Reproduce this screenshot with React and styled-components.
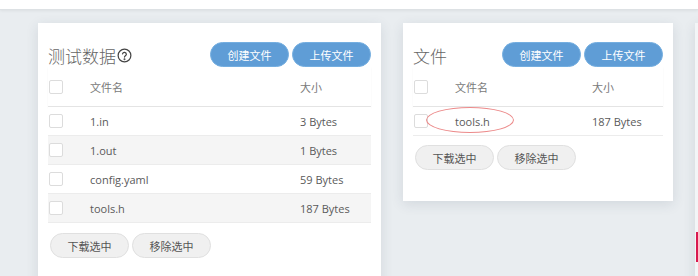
import React from 'react'
import styled, { createGlobalStyle } from 'styled-components'

const GlobalStyle = createGlobalStyle`
  html, body {
    margin: 0;
    padding: 0;
    background: #e9edf0;
    overflow: hidden;
    font-family: "Open Sans", "Noto Sans CJK SC", sans-serif;
  }
`

const TopBar = styled.header`
  height: 9px;
  background: #ffffff;
  border-bottom: 1px solid #dde1e4;
  box-shadow: 0 1px 3px rgba(0,0,0,0.06);
`

const Board = styled.main`
  display: flex;
  align-items: flex-start;
  gap: 22px;
  padding: 13px 0 0 38px;
  width: 1200px;
`

const Card = styled.section`
  position: relative;
  flex: 0 0 ${p => p.$width}px;
  height: ${p => p.$height ? `${p.$height}px` : 'auto'};
  box-sizing: border-box;
  background: ${p => p.$faded ? '#f3f5f7' : '#ffffff'};
  padding: 19px 10px ${p => p.$bottom || 29}px 10px;
  box-shadow: 0 3px 12px rgba(40,60,80,0.12);
`

const TitleRow = styled.div`
  display: flex;
  align-items: center;
  height: 25px;
`

const Title = styled.h2`
  flex: 1;
  display: flex;
  align-items: center;
  margin: 0;
  padding-top: 2px;
  font-family: "Noto Sans CJK SC", sans-serif;
  font-size: 17px;
  font-weight: 300;
  color: #666666;
`

const Help = styled.svg`
  width: 15px;
  height: 15px;
  margin-left: 1px;
`

const Buttons = styled.div`
  display: flex;
  gap: 3px;
`

const PillButton = styled.button`
  width: 79px;
  height: 25px;
  border-radius: 13px;
  border: 1px solid ${p => p.$primary ? '#74aee0' : '#e0e0e0'};
  background: ${p => p.$primary ? '#5f9dd6' : '#f0f0f0'};
  color: ${p => p.$primary ? '#ffffff' : '#555555'};
  font-family: "Noto Sans CJK SC", sans-serif;
  font-size: 11px;
  padding: 0;
  cursor: pointer;
`

const Row = styled.div`
  position: relative;
  display: grid;
  grid-template-columns: 42px 1fr 71px;
  align-items: center;
  height: ${p => p.$head ? 40 : 29}px;
  box-sizing: border-box;
  background: ${p => p.$stripe ? '#f5f5f5' : '#ffffff'};
  border-bottom: 1px solid ${p => p.$head ? '#e4e4e4' : '#ececec'};
  box-shadow: ${p => p.$head ? '0 1px 2px rgba(0,0,0,0.04)' : 'none'};
  font-size: 11px;
  color: ${p => p.$head ? '#7a7a7a' : '#5a5a5a'};
  font-family: ${p => p.$head ? '"Noto Sans CJK SC", sans-serif' : '"Open Sans", "Noto Sans CJK SC", sans-serif'};
`

const Check = styled.span`
  display: block;
  width: 12px;
  height: 12px;
  margin-left: 1px;
  border: 1px solid #dcdcdc;
  border-radius: 2px;
  background: #ffffff;
`

const Mark = styled.span`
  position: absolute;
  left: 13px;
  top: 0px;
  width: 88px;
  height: 26px;
  border: 1px solid #ec8a8a;
  border-radius: 50%;
  box-sizing: border-box;
  pointer-events: none;
`

const Actions = styled.div`
  display: flex;
  gap: 3px;
  margin-top: ${p => p.$gap}px;
  padding-left: 2px;
`

const RedTab = styled.span`
  position: absolute;
  left: 1px;
  top: 209px;
  width: 4px;
  height: 30px;
  background: #d9194f;
`

const HelpIcon = () => (
  <Help viewBox="0 0 16 16" fill="none" stroke="#444" strokeWidth="1.3" strokeLinecap="round">
    <circle cx="8" cy="8" r="6.8" />
    <path d="M5.9 6.2a2.1 2.1 0 0 1 4.1.5c0 1.4-2 1.8-2 3" />
    <circle cx="8" cy="11.9" r="0.4" fill="#444" />
  </Help>
)

const FileTable = ({ files, marked }) => (
  <div>
    <Row $head>
      <Check />
      <span>文件名</span>
      <span>大小</span>
    </Row>
    {files.map((f, i) => (
      <Row key={f.name} $stripe={i % 2 === 1}>
        <Check />
        <span>{f.name}</span>
        <span>{f.size} Bytes</span>
        {marked && <Mark />}
      </Row>
    ))}
  </div>
)

const FilePanel = ({ title, help, files, marked, width, height, gap, bottom }) => (
  <Card $width={width} $height={height} $bottom={bottom}>
    <TitleRow>
      <Title>{title}{help && <HelpIcon />}</Title>
      <Buttons>
        <PillButton $primary>创建文件</PillButton>
        <PillButton $primary>上传文件</PillButton>
      </Buttons>
    </TitleRow>
    <FileTable files={files} marked={marked} />
    <Actions $gap={gap}>
      <PillButton>下载选中</PillButton>
      <PillButton>移除选中</PillButton>
    </Actions>
  </Card>
)

const testData = [
  { name: '1.in', size: 3 },
  { name: '1.out', size: 1 },
  { name: 'config.yaml', size: 59 },
  { name: 'tools.h', size: 187 },
]

const extraFiles = [{ name: 'tools.h', size: 187 }]

export default function App() {
  return (
    <>
      <GlobalStyle />
      <TopBar />
      <Board>
        <FilePanel title="测试数据" help files={testData} width={343} height={300} gap={10} />
        <FilePanel title="文件" files={extraFiles} marked width={270} gap={9} bottom={31} />
        <Card $width={200} $height={300} $faded>
          <RedTab />
        </Card>
      </Board>
    </>
  )
}
